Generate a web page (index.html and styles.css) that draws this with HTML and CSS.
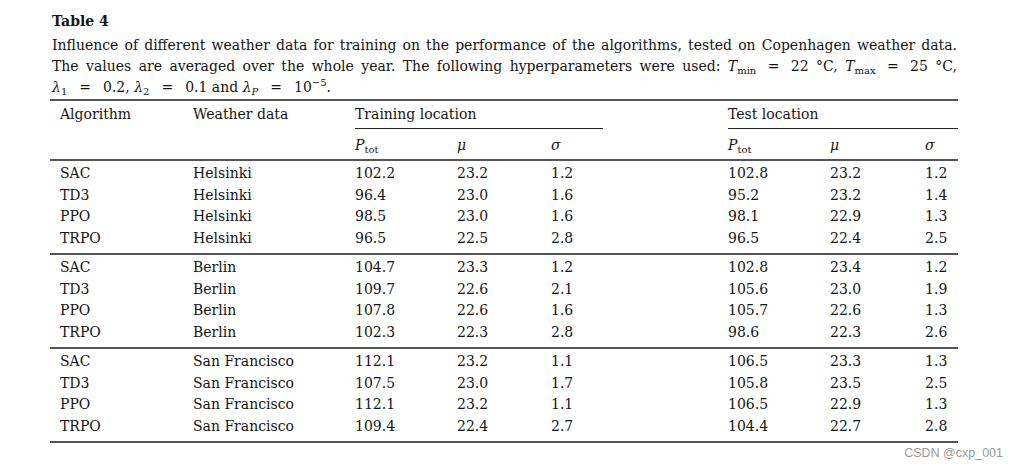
FILE: index.html
```html
<!DOCTYPE html>
<html>
<head>
<meta charset="utf-8">
<link rel="stylesheet" href="styles.css">
</head>
<body>
<div class="page">
  <div class="caption">
    <div class="title">Table 4</div>
    <div class="jline">Influence of different weather data for training on the performance of the algorithms, tested on Copenhagen weather data.</div>
    <div class="jline">The values are averaged over the whole year. The following hyperparameters were used: <i>T</i><sub>min</sub> <span class="eq2">=</span> 22 °C, <i>T</i><sub>max</sub> <span class="eq2">=</span> 25 °C,</div>
    <div class="line"><i>λ</i><sub>1</sub><span class="eq">=</span>0.2, <i>λ</i><sub>2</sub><span class="eq">=</span>0.1 and <i>λ</i><sub><i>P</i></sub><span class="eq">=</span>10<sup>−5</sup>.</div>
  </div>
  <table class="data">
    <colgroup>
      <col class="c1"><col class="c2"><col class="c3"><col class="c4"><col class="c5"><col class="c6"><col class="c7"><col class="c8"><col class="c9">
    </colgroup>
    <thead>
      <tr class="hr1">
        <th>Algorithm</th>
        <th>Weather data</th>
        <th colspan="3" class="spanc"><div class="spanbox">Training location</div></th>
        <th></th>
        <th colspan="3" class="spanc"><div class="spanbox">Test location</div></th>
      </tr>
      <tr class="hr2">
        <th></th>
        <th></th>
        <th><i>P</i><sub>tot</sub></th>
        <th><i>μ</i></th>
        <th><i>σ</i></th>
        <th></th>
        <th><i>P</i><sub>tot</sub></th>
        <th><i>μ</i></th>
        <th><i>σ</i></th>
      </tr>
    </thead>
    <tbody class="grp">
      <tr><td>SAC</td><td>Helsinki</td><td>102.2</td><td>23.2</td><td>1.2</td><td></td><td>102.8</td><td>23.2</td><td>1.2</td></tr>
      <tr><td>TD3</td><td>Helsinki</td><td>96.4</td><td>23.0</td><td>1.6</td><td></td><td>95.2</td><td>23.2</td><td>1.4</td></tr>
      <tr><td>PPO</td><td>Helsinki</td><td>98.5</td><td>23.0</td><td>1.6</td><td></td><td>98.1</td><td>22.9</td><td>1.3</td></tr>
      <tr><td>TRPO</td><td>Helsinki</td><td>96.5</td><td>22.5</td><td>2.8</td><td></td><td>96.5</td><td>22.4</td><td>2.5</td></tr>
    </tbody>
    <tbody class="grp">
      <tr><td>SAC</td><td>Berlin</td><td>104.7</td><td>23.3</td><td>1.2</td><td></td><td>102.8</td><td>23.4</td><td>1.2</td></tr>
      <tr><td>TD3</td><td>Berlin</td><td>109.7</td><td>22.6</td><td>2.1</td><td></td><td>105.6</td><td>23.0</td><td>1.9</td></tr>
      <tr><td>PPO</td><td>Berlin</td><td>107.8</td><td>22.6</td><td>1.6</td><td></td><td>105.7</td><td>22.6</td><td>1.3</td></tr>
      <tr><td>TRPO</td><td>Berlin</td><td>102.3</td><td>22.3</td><td>2.8</td><td></td><td>98.6</td><td>22.3</td><td>2.6</td></tr>
    </tbody>
    <tbody class="grp last">
      <tr><td>SAC</td><td>San Francisco</td><td>112.1</td><td>23.2</td><td>1.1</td><td></td><td>106.5</td><td>23.3</td><td>1.3</td></tr>
      <tr><td>TD3</td><td>San Francisco</td><td>107.5</td><td>23.0</td><td>1.7</td><td></td><td>105.8</td><td>23.5</td><td>2.5</td></tr>
      <tr><td>PPO</td><td>San Francisco</td><td>112.1</td><td>23.2</td><td>1.1</td><td></td><td>106.5</td><td>22.9</td><td>1.3</td></tr>
      <tr><td>TRPO</td><td>San Francisco</td><td>109.4</td><td>22.4</td><td>2.7</td><td></td><td>104.4</td><td>22.7</td><td>2.8</td></tr>
    </tbody>
  </table>
  <div class="watermark">CSDN @cxp_001</div>
</div>
</body>
</html>
```
FILE: styles.css
```css
html, body {
  margin: 0;
  padding: 0;
  background: #ffffff;
}
body {
  font-family: "DejaVu Serif", "Liberation Serif", serif;
  font-size: 14px;
  color: #151515;
}
.page {
  padding-left: 50px;
  width: 908px;
}
.caption {
  padding-left: 2px;
  width: 905px;
}
.title {
  font-weight: bold;
  line-height: 21px;
  margin-top: 11px;
  margin-bottom: 3px;
}
.jline, .line {
  line-height: 21px;
  white-space: nowrap;
}
.jline {
  text-align: justify;
  text-align-last: justify;
}
sub, sup {
  font-size: 10px;
  line-height: 0;
}
sub {
  vertical-align: -3px;
}
sup {
  vertical-align: 6px;
}
.eq {
  margin: 0 12px;
}
.eq2 {
  margin: 0 4px;
}
table.data {
  margin-top: 1px;
  border-collapse: separate;
  border-spacing: 0;
  table-layout: fixed;
  width: 908px;
}
col.c1 { width: 133px; }
col.c2 { width: 162px; }
col.c3 { width: 102px; }
col.c4 { width: 94px; }
col.c5 { width: 62px; }
col.c6 { width: 115px; }
col.c7 { width: 102px; }
col.c8 { width: 95px; }
col.c9 { width: 43px; }
th, td {
  padding: 0 0 0 10px;
  text-align: left;
  font-weight: normal;
  white-space: nowrap;
}
.hr1 th {
  border-top: 2px solid #555;
  height: 28px;
  line-height: 26px;
  padding-bottom: 2px;
  vertical-align: top;
}
.hr1 th.spanc {
  padding: 0;
}
.spanbox {
  margin-left: 10px;
  height: 27px;
  line-height: 26px;
  border-bottom: 1px solid #222;
}
.hr2 th {
  height: 28px;
  line-height: 28px;
  vertical-align: middle;
}
.grp td {
  line-height: 21.5px;
}
.grp tr:first-child td {
  border-top: 2px solid #555;
  padding-top: 2px;
}
.grp tr:last-child td {
  padding-bottom: 4px;
}
.grp.last tr:last-child td {
  border-bottom: 2px solid #555;
}
.watermark {
  font-family: "Liberation Sans", Arial, sans-serif;
  font-size: 12.5px;
  color: #9a9a9a;
  text-align: right;
  margin-right: -45px;
  line-height: 18px;
  margin-top: 1px;
}
```
